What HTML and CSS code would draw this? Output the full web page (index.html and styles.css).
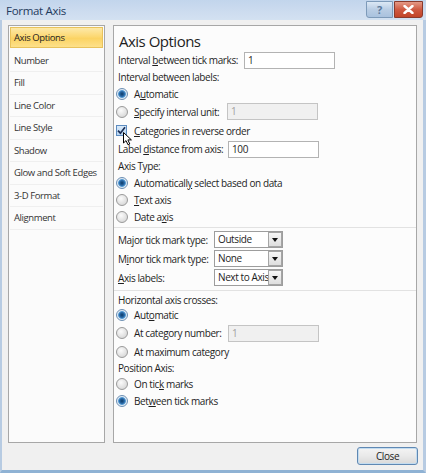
FILE: index.html
```html
<!DOCTYPE html>
<html>
<head>
<meta charset="utf-8">
<link rel="stylesheet" href="styles.css">
</head>
<body>
<div class="window">
  <div class="titlebar">
    <span class="title">Format Axis</span>
    <div class="tb-buttons">
      <div class="tb-help">?</div>
      <div class="tb-close">
        <svg width="11" height="9" viewBox="0 0 11 9"><path d="M1.5 1 L9.5 8 M9.5 1 L1.5 8" stroke="#fff" stroke-width="2.4" stroke-linecap="round"/></svg>
      </div>
    </div>
  </div>
  <div class="main">
    <div class="nav">
      <div class="nav-item selected">Axis Options</div>
      <div class="nav-item">Number</div>
      <div class="nav-item">Fill</div>
      <div class="nav-item">Line Color</div>
      <div class="nav-item">Line Style</div>
      <div class="nav-item">Shadow</div>
      <div class="nav-item">Glow and Soft Edges</div>
      <div class="nav-item">3-D Format</div>
      <div class="nav-item">Alignment</div>
    </div>
    <div class="panel">
      <div class="heading">Axis Options</div>
      <div class="row h18"><span class="lbl w-tick">Interval <u>b</u>etween tick marks:</span><div class="input">1</div></div>
      <div class="row h16"><span class="lbl">Interval between labels:</span></div>
      <div class="row h17"><span class="radio on"></span><span class="rlbl">A<u>u</u>tomatic</span></div>
      <div class="row h19"><span class="radio"></span><span class="rlbl w-spec"><u>S</u>pecify interval unit:</span><div class="input disabled">1</div></div>
      <div class="row h19 chk-row"><span class="check"><svg width="9" height="9" viewBox="0 0 9 9"><path d="M1 4.6 L3.4 7.2 L8 1.2" fill="none" stroke="#1c2f56" stroke-width="1.7"/></svg></span><span class="rlbl"><u>C</u>ategories in reverse order</span>
        <svg class="cursor" width="10" height="14" viewBox="0 0 10 14"><path d="M0.5 0.5 L0.5 11 L3 8.6 L5 12.8 L6.8 12 L4.9 7.9 L8.4 7.9 Z" fill="#fff" stroke="#000" stroke-width="1" stroke-linejoin="round"/></svg>
      </div>
      <div class="row h18"><span class="lbl w-dist">Label <u>d</u>istance from axis:</span><div class="input">100</div></div>
      <div class="row h16"><span class="lbl">Axis Type:</span></div>
      <div class="row h17"><span class="radio on"></span><span class="rlbl">Automaticall<u>y</u> select based on data</span></div>
      <div class="row h17"><span class="radio"></span><span class="rlbl"><u>T</u>ext axis</span></div>
      <div class="row h17"><span class="radio"></span><span class="rlbl">Date a<u>x</u>is</span></div>
      <div class="sep sep1"></div>
      <div class="row h19"><span class="lbl w-sel">Major tick mark type:</span><div class="select"><span class="val">Outside</span><span class="arrow"></span></div></div>
      <div class="row h19"><span class="lbl w-sel">M<u>i</u>nor tick mark type:</span><div class="select"><span class="val">None</span><span class="arrow"></span></div></div>
      <div class="row h19"><span class="lbl w-sel"><u>A</u>xis labels:</span><div class="select"><span class="val">Next to Axis</span><span class="arrow"></span></div></div>
      <div class="sep sep2"></div>
      <div class="row h15"><span class="lbl">Horizontal axis crosses:</span></div>
      <div class="row h16"><span class="radio on"></span><span class="rlbl">Aut<u>o</u>matic</span></div>
      <div class="row h20"><span class="radio"></span><span class="rlbl w-cat">At cate<u>g</u>ory number:</span><div class="input disabled">1</div></div>
      <div class="row h17"><span class="radio"></span><span class="rlbl">At maximum category</span></div>
      <div class="row h16"><span class="lbl">Position Axis:</span></div>
      <div class="row h16"><span class="radio"></span><span class="rlbl">On tic<u>k</u> marks</span></div>
      <div class="row h17"><span class="radio on"></span><span class="rlbl">Bet<u>w</u>een tick marks</span></div>
    </div>
  </div>
  <div class="footer">
    <div class="btn">Close</div>
  </div>
</div>
</body>
</html>
```
FILE: styles.css
```css
html, body {
  margin: 0;
  padding: 0;
  background: #f0f0f0;
}
body {
  font-family: "Open Sans", "Noto Sans", sans-serif;
  font-size: 10px;
  letter-spacing: -0.4px;
  color: #1e1e1e;
}
.window {
  width: 426px;
  height: 473px;
  box-sizing: border-box;
  display: flex;
  flex-direction: column;
  background: #f0f0f0;
  border-left: 2px solid #b7cbe2;
  border-right: 3px solid #b7cbe2;
  border-bottom: 3px solid #8fb2d4;
}
.titlebar {
  height: 20px;
  flex: none;
  display: flex;
  align-items: center;
  background: linear-gradient(#c2d5ec, #cddcef 60%, #d3e1f1);
  margin-left: -2px;
  margin-right: -3px;
  padding-left: 6px;
}
.title {
  font-size: 11.5px;
  letter-spacing: -0.3px;
  color: #1f3a5c;
}
.tb-buttons {
  margin-left: auto;
  align-self: flex-start;
  display: flex;
  gap: 1px;
  padding-top: 1px;
  padding-right: 3px;
}
.tb-help {
  width: 25px;
  height: 15px;
  border: 1px solid #7d9ab9;
  border-radius: 0 0 0 3px;
  background: linear-gradient(#dce8f5, #b9cde4 50%, #a9c2de);
  color: #5c7a9c;
  font-size: 11px;
  font-weight: bold;
  text-align: center;
  line-height: 15px;
  letter-spacing: 0;
}
.tb-close {
  width: 27px;
  height: 15px;
  border: 1px solid #8a3a2c;
  border-radius: 0 0 3px 0;
  background: linear-gradient(#e49a87, #cf5a42 50%, #c24428);
  display: flex;
  align-items: center;
  justify-content: center;
}
.main {
  flex: 1;
  display: flex;
  gap: 8px;
  padding: 5px 6px 0 6px;
  min-height: 0;
}
.nav {
  width: 97px;
  height: 418px;
  box-sizing: border-box;
  border: 1px solid #a7a7a7;
  background: #fbfbfb;
  padding: 1px;
  flex: none;
}
.nav-item {
  height: 22.5px;
  box-sizing: border-box;
  border-bottom: 1px solid #efefef;
  padding-left: 4px;
  display: flex;
  align-items: center;
  color: #333;
  font-size: 9.5px;
  white-space: nowrap;
}
.nav-item.selected {
  height: 21px;
  margin-bottom: 1.5px;
  border: 1px solid #e8c25c;
  background: linear-gradient(#fde9a9, #fcd872 45%, #fbd363 55%, #fde08a);
  color: #222;
  padding-left: 3px;
}
.panel {
  flex: 1;
  height: 418px;
  box-sizing: border-box;
  border: 1px solid #a7a7a7;
  background: #fcfcfc;
  padding: 0 0 0 3px;
}
.heading {
  height: 25px;
  font-size: 15px;
  letter-spacing: -0.5px;
  line-height: 30px;
  padding-left: 2px;
  color: #1e1e1e;
}
.row {
  display: flex;
  align-items: center;
  position: relative;
}
.h15 { height: 15px; }
.h16 { height: 16px; }
.h17 { height: 17px; }
.h18 { height: 18px; }
.h19 { height: 19px; }
.h20 { height: 20px; }
.lbl {
  padding-left: 1px;
  white-space: nowrap;
  flex: none;
}
.rlbl {
  white-space: nowrap;
  flex: none;
}
.w-tick { width: 126px; }
.w-dist { width: 110px; }
.w-sel { width: 96px; }
.w-spec { width: 93px; }
.w-cat { width: 94px; }
.radio {
  width: 12px;
  height: 12px;
  box-sizing: border-box;
  border-radius: 50%;
  border: 1px solid #9a9a9a;
  background: radial-gradient(circle at 40% 35%, #fbfbfb, #dcdcdc 70%, #c8c8c8);
  margin-left: -1px;
  margin-right: 6px;
  flex: none;
}
.radio.on {
  border-color: #6c8fb3;
  background: radial-gradient(circle at 50% 50%, #0d3a66 0, #2a6aa8 2.5px, #5fa2d8 3.6px, #d7e6f3 4.2px, #e9eff6 5px);
}
.check {
  width: 11px;
  height: 11px;
  box-sizing: border-box;
  border: 1px solid #5d8cc0;
  background: linear-gradient(#d8e9f9, #b9d6f3);
  margin-left: -1px;
  margin-right: 7px;
  display: flex;
  align-items: center;
  justify-content: center;
  flex: none;
}
.cursor {
  position: absolute;
  left: 6px;
  top: 11px;
}
.input {
  width: 91px;
  height: 17px;
  box-sizing: border-box;
  border: 1px solid #b3b3b3;
  background: #fff;
  padding-left: 3px;
  line-height: 15px;
  flex: none;
}
.input.disabled {
  background: #f0f0f0;
  border-color: #c4c4c4;
  color: #a0a0a0;
}
.select {
  width: 69px;
  height: 17px;
  box-sizing: border-box;
  border: 1px solid #9d9d9d;
  background: #fff;
  display: flex;
  flex: none;
}
.select .val {
  flex: 1;
  overflow: hidden;
  white-space: nowrap;
  padding-left: 3px;
  line-height: 15px;
}
.select .arrow {
  width: 14px;
  flex: none;
  box-sizing: border-box;
  border: 1px solid #a5a5a5;
  background: linear-gradient(#f6f6f6, #dedede);
  display: flex;
  align-items: center;
  justify-content: center;
}
.select .arrow::after {
  content: "";
  border-left: 3.5px solid transparent;
  border-right: 3.5px solid transparent;
  border-top: 4px solid #111;
}
.sep {
  height: 1px;
  background: #e2e2e2;
  margin-left: -3px;
}
.sep1 { margin-top: 2px; margin-bottom: 2px; }
.sep2 { margin-top: 3px; margin-bottom: 1px; }
.footer {
  height: 27px;
  flex: none;
  display: flex;
  justify-content: flex-end;
  padding-right: 5px;
  padding-top: 4px;
  box-sizing: border-box;
}
.btn {
  width: 61px;
  height: 18px;
  box-sizing: border-box;
  border: 1px solid #5f88b3;
  border-radius: 3px;
  background: linear-gradient(#f4f4f4, #e9e9e9 50%, #d9d9d9);
  box-shadow: inset 0 0 0 1px #c3dcf0;
  text-align: center;
  line-height: 16px;
  color: #222;
}
```
